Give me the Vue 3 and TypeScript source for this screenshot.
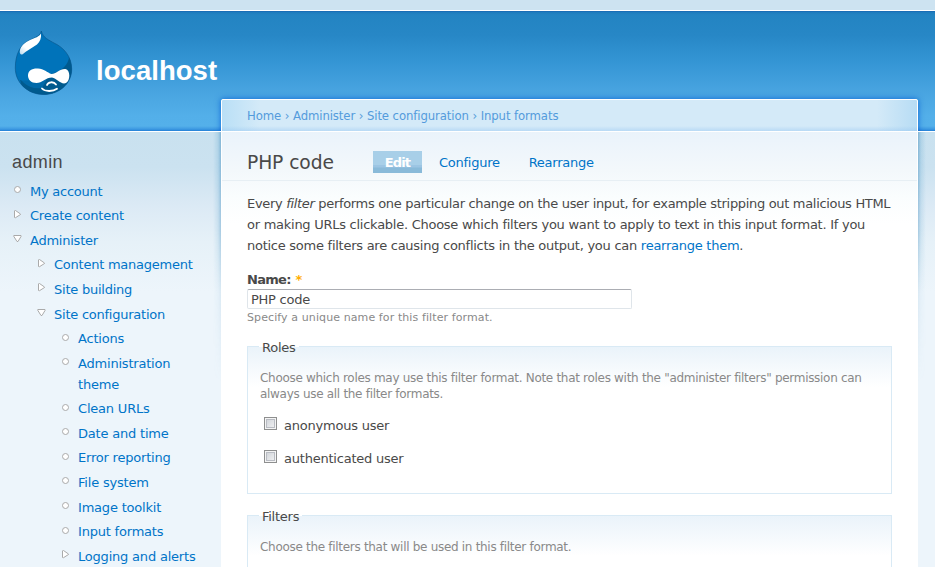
<script setup lang="ts">
type Marker = 'leaf' | 'collapsed' | 'expanded'
interface MenuItem { label: string; marker: Marker; depth: number }

const menu: MenuItem[] = [
  { label: 'My account', marker: 'leaf', depth: 0 },
  { label: 'Create content', marker: 'collapsed', depth: 0 },
  { label: 'Administer', marker: 'expanded', depth: 0 },
  { label: 'Content management', marker: 'collapsed', depth: 1 },
  { label: 'Site building', marker: 'collapsed', depth: 1 },
  { label: 'Site configuration', marker: 'expanded', depth: 1 },
  { label: 'Actions', marker: 'leaf', depth: 2 },
  { label: 'Administration theme', marker: 'leaf', depth: 2 },
  { label: 'Clean URLs', marker: 'leaf', depth: 2 },
  { label: 'Date and time', marker: 'leaf', depth: 2 },
  { label: 'Error reporting', marker: 'leaf', depth: 2 },
  { label: 'File system', marker: 'leaf', depth: 2 },
  { label: 'Image toolkit', marker: 'leaf', depth: 2 },
  { label: 'Input formats', marker: 'leaf', depth: 2 },
  { label: 'Logging and alerts', marker: 'collapsed', depth: 2 },
]
const crumbs: string[] = ['Home', 'Administer', 'Site configuration', 'Input formats']
const roles: string[] = ['anonymous user', 'authenticated user']
const drop = 'M30.300 2 C32 9 38 11 43 14 C52 18 60.700 27 60.700 40 C60.700 55 48 65.500 32.500 65.500 C17 65.500 4.300 54 4.300 39 C4.300 26 9 16 17 12 C24 8.500 29.500 7 30.300 2Z'
</script>

<template>
  <div class="page">
    <div class="strip"></div>
    <header class="header">
      <svg class="logo" width="64" height="72" viewBox="0 0 64 72">
        <defs>
          <clipPath id="drop"><path :d="drop" /></clipPath>
          <linearGradient id="shine" x1="1" y1="0" x2="0" y2="1"><stop offset="0" stop-color="#fff" /><stop offset=".7" stop-color="#fff" /><stop offset="1" stop-color="#b9d9ee" /></linearGradient>
        </defs>
        <path :d="drop" fill="#0073ba" />
        <g clip-path="url(#drop)">
          <path d="M58 25 C59 35 51 42 40 45 C28 49 17 53 9 51 L14 68 H62 V25Z" fill="#005a8e" />
          <path d="M5 40 C8 52 17 61 31 59 L36 50 L20 44Z" fill="#0073ba" opacity=".6" />
        </g>
        <path :d="drop" fill="none" stroke="#075388" opacity=".6" />
        <path d="M30 4.500 C30.500 9 29 13 26 15.500 C21 19 15 22 12 25 C10 26.500 8.500 25 8.800 22 C9.500 17 14 13.500 19 11 C24 9 28.500 7.500 30 4.500Z" fill="url(#shine)" />
        <path d="M26 39.500 C32.500 39 36 43.500 40.500 45 C45 45 49 39.500 54.500 40 C59.500 41 59.500 51.500 55 54 C50 56 46 49.500 41 48.500 C35 48.500 31 54 25.500 54 C20 54 17 50.500 17 46.500 C17 42 20.500 39.500 26 39.500Z" fill="#fff" />
        <path d="M36 56 C37 53 42.500 52 45 55.500" fill="none" stroke="#fff" stroke-width="1.800" stroke-linecap="round" />
        <path d="M31 59.500 C34 62.800 42 62.800 46 59.700" fill="none" stroke="#fff" stroke-width="1.800" stroke-linecap="round" />
      </svg>
      <h1 class="site">localhost</h1>
    </header>

    <div class="columns">
      <aside class="sidebar">
        <h2 class="user">admin</h2>
        <ul class="menu">
          <li v-for="item in menu" :key="item.label" :class="['item', 'depth-' + item.depth]">
            <svg class="marker" width="9" height="9" viewBox="0 0 9 9">
              <circle v-if="item.marker === 'leaf'" cx="4.500" cy="4.500" r="3" />
              <path v-else-if="item.marker === 'collapsed'" d="M1.500 .8 L2.500 .5 L7.500 4 L7.500 4.500 L2.500 7.700 L1.500 7.500Z" />
              <path v-else d="M.8 1.500 H8 L8.200 2.200 L5 7.500 H4 L.7 2.200Z" />
            </svg>
            <a>{{ item.label }}</a>
          </li>
        </ul>
      </aside>

      <main class="panel">
        <nav class="crumbs">
          <template v-for="(crumb, i) in crumbs" :key="crumb"><span v-if="i"> › </span><a>{{ crumb }}</a></template>
        </nav>
        <section class="content">
          <div class="heading">
            <h2 class="title">PHP code</h2>
            <a class="tab active">Edit</a>
            <a class="tab">Configure</a>
            <a class="tab">Rearrange</a>
          </div>
          <div class="body">
            <p class="help">
              <span class="line first">Every <em>filter</em> performs one particular change on the user input, for example stripping out malicious HTML</span>
              <span class="line">or making URLs clickable. Choose which filters you want to apply to text in this input format. If you</span>
              <span class="line">notice some filters are causing conflicts in the output, you can <a>rearrange them</a>.</span>
            </p>
            <label class="label" for="name">Name: <span class="required">*</span></label>
            <input id="name" class="field" type="text" value="PHP code">
            <div class="hint">Specify a unique name for this filter format.</div>

            <div class="fieldset roles">
              <span class="legend">Roles</span>
              <p class="desc"><span class="line">Choose which roles may use this filter format. Note that roles with the "administer filters" permission can</span><span class="line">always use all the filter formats.</span></p>
              <label v-for="role in roles" :key="role" class="option"><input type="checkbox" class="box">{{ role }}</label>
            </div>
            <div class="fieldset">
              <span class="legend">Filters</span>
              <p class="desc">Choose the filters that will be used in this filter format.</p>
            </div>
          </div>
        </section>
      </main>
    </div>
  </div>
</template>

<style>
body { margin: 0; overflow: hidden; }
</style>

<style scoped>
* { box-sizing: border-box; }
.page {
  width: 935px;
  height: 567px;
  overflow: hidden;
  background: #edf5fa;
  color: #494949;
  font: 13px/20.8px Verdana, "DejaVu Sans", sans-serif;
  letter-spacing: -.26px;
}
a { color: #0074c8; }
h1, h2, p, ul { margin: 0; padding: 0; }
.strip { height: 11px; background: #cde3f1; border-bottom: 1px solid #fff; }
.header {
  display: flex;
  height: 120px;
  padding: 18px 0 0 11px;
  background: linear-gradient(#155fae 0, #1e7bbd 1px, #2384c2 4px, #2787c6 24px, #3596d5 52px, #48a4e0 80px, #53afe9 105px, #54b0ea 115px, #3e9ae2 118px, #2480d6 120px);
}
.site { margin: 26px 0 0 21px; font: bold 27.500px/32px "Liberation Sans", sans-serif; color: #fff; letter-spacing: .05px; }
.columns {
  display: flex;
  height: 436px;
  border-top: 1px solid #fff;
  background: linear-gradient(#c9e1ef 0, #cbe2f0 35px, #dceaf5 75px, #e6f1f8 110px, #edf5fb 160px);
}
.sidebar { width: 221px; padding: 19px 0 0 12px; }
.user { font: 18px/22px "Liberation Sans", sans-serif; letter-spacing: .4px; }
.menu { margin-top: 8.700px; list-style: none; }
.item { display: flex; margin-bottom: 3.800px; width: 190px; letter-spacing: -.24px; }
.item.depth-1 { padding-left: 24px; }
.item.depth-2 { padding-left: 48px; letter-spacing: -.2px; }
.item a { flex: 1; }
.marker { flex: none; margin: 3.300px 8px 0 1px; fill: #fff; stroke: #aaa; stroke-width: 1; }
.panel {
  position: relative;
  width: 697px;
  height: 469px;
  margin-top: -33px;
}
.panel::before, .panel::after {
  content: "";
  position: absolute;
  z-index: 0;
  pointer-events: none;
}
.panel::before { top: 0; left: 0; right: 0; height: 60px; box-shadow: 0 0 6px rgba(0, 90, 210, .85); clip-path: inset(-8px -8px 28px); }
.panel::after {
  top: 33px;
  left: -8px;
  right: -8px;
  height: 250px;
  background:
    linear-gradient(270deg, rgba(80, 150, 195, .6), rgba(100, 170, 210, .25) 3px, transparent) 0 0 / 8px 100% no-repeat,
    linear-gradient(90deg, rgba(80, 150, 195, .6), rgba(100, 170, 210, .25) 3px, transparent) 100% 0 / 8px 100% no-repeat;
  mask-image: linear-gradient(#000, rgba(0, 0, 0, .7) 100px, rgba(0, 0, 0, .2) 160px, transparent);
}
.crumbs {
  position: relative;
  z-index: 1;
  height: 33px;
  padding: 7px 25px 0;
  border: 1px solid #fff;
  border-radius: 2px 2px 0 0;
  background: linear-gradient(transparent 26px, rgba(145, 194, 240, .4) 31px), linear-gradient(90deg, #b9dff6, #d4eaf8 38px, #d4eaf8 655px, #b7dcf4);
  background-color: #d4eaf8;
  color: #5a9fda;
  font-size: 11.700px;
  line-height: 18px;
  letter-spacing: -.1px;
  white-space: pre;
}
.crumbs a { color: #539bdc; }
.content { position: relative; z-index: 1; border: solid #fff; border-width: 0 1px; background: linear-gradient(#eaf3fb 0, #f3f8fb 38px, #fafdfe 65px, #fff 92px); height: 436px; }
.heading { display: flex; height: 49px; padding: 19px 25px 0; border-bottom: 1px solid #e7eff4; align-items: flex-start; }
.title { width: 126px; padding-top: 1px; font: 18.700px/22px Verdana, "DejaVu Sans", sans-serif; letter-spacing: -.1px; }
.tab { line-height: 23px; margin-right: 29px; }
.tab.active { width: 49px; height: 22px; margin-right: 17px; background: linear-gradient(#a8cfe8 0 14px, #9cc5e3 14px 16px, #89bad9 17px); color: #fff; font-weight: bold; text-align: center; letter-spacing: -.9px; }
.body { padding: 13px 25px 0; }
.help { height: 62px; }
.line { display: block; white-space: nowrap; }
.first { letter-spacing: -.32px; }
.label { display: block; margin-top: 14px; font-weight: bold; height: 19px; letter-spacing: -.7px; }
.required { margin-left: 1px; color: #ffae00; }
.field { display: block; width: 385px; height: 20px; padding: 2px 3px 0; border: 1px solid #dfe5ea; border-top-color: #abadb3; border-radius: 2px; color: #494949; background: #fff; font: inherit; letter-spacing: -.25px; }
.hint { font-size: 11px; line-height: 17px; color: #898989; letter-spacing: .1px; }
.fieldset { position: relative; height: 148px; padding: 23px 12px 0; border: 1px solid #d9eaf5; background: linear-gradient(#eaf3fa 0, #fff 40px); }
.roles { margin: 20px 0 21px; }
.legend { position: absolute; left: 11px; top: -9px; padding: 0 3px; background: linear-gradient(#fff 9px, transparent 9px); }
.desc { font-size: 12px; line-height: 16px; color: #898989; letter-spacing: -.3px; }
.option { display: flex; height: 21px; margin: 14px 0 12px; letter-spacing: -.22px; }
.option + .option { margin-top: 12px; }
.box { appearance: none; width: 13px; height: 13px; margin: 1px 7px 0 4px; border: 1px solid #8e8f8f; background: linear-gradient(135deg, #cbcfd5, #f6f6f6); box-shadow: inset 0 0 0 1px #f4f4f4, inset 0 0 0 2px #b9bcc3; }
</style>
